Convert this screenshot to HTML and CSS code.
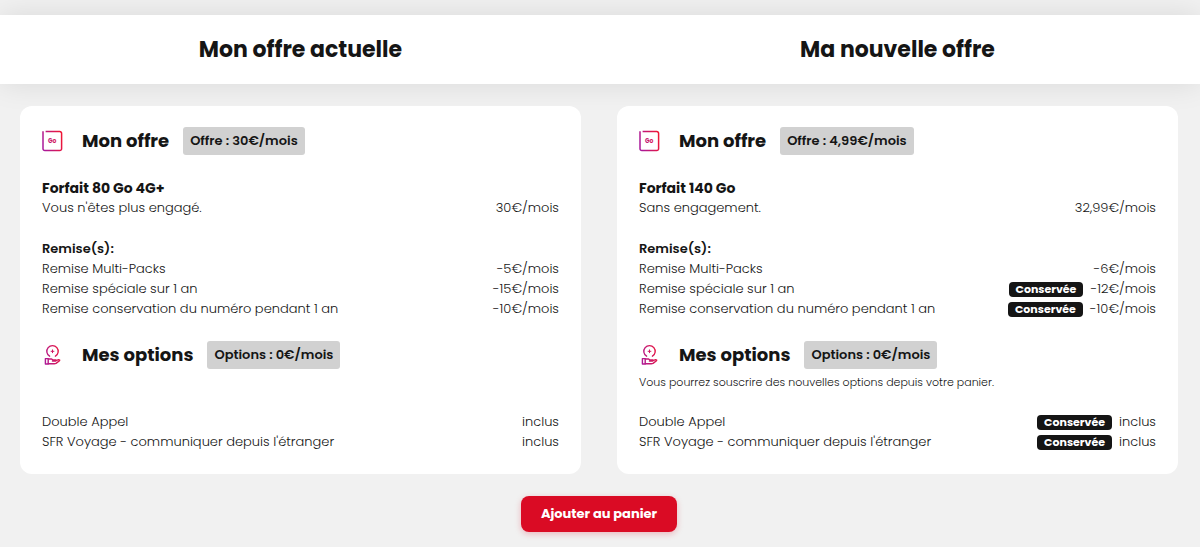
FILE: index.html
```html
<!DOCTYPE html>
<html lang="fr">
<head>
<meta charset="utf-8">
<meta name="viewport" content="width=device-width, initial-scale=1">
<title>Comparer mes offres</title>
<link rel="stylesheet" href="styles.css">
</head>
<body>
<svg class="defs" width="0" height="0" aria-hidden="true">
  <defs>
    <linearGradient id="brand" gradientUnits="userSpaceOnUse" x1="1" y1="14" x2="20" y2="9">
      <stop offset="0" stop-color="#a9199a"/>
      <stop offset="1" stop-color="#ee1637"/>
    </linearGradient>
    <symbol id="icon-data" viewBox="0 0 22 22">
      <path d="M1 1.2V18.8a1.8 1.8 0 0 0 1.8 1.8H17.8a1.8 1.8 0 0 0 1.8-1.8V3.4a1.8 1.8 0 0 0-1.8-1.8H3.6" fill="none" stroke="url(#brand)" stroke-width="1.5"/>
      <text x="10.2" y="13.2" text-anchor="middle" class="icon-label" fill="url(#brand)">Go</text>
    </symbol>
    <symbol id="icon-options" viewBox="0 0 22 22">
      <g fill="none" stroke="url(#brand)" stroke-width="1.4" stroke-linejoin="round" stroke-linecap="round">
        <path d="M7.6 12.2A5.7 5.7 0 1 1 13.4 12.2"/>
        <path d="M10.5 5.9v2.8M9.1 7.3h2.8" stroke-width="1"/>
        <path d="M3.4 14.6h2.8v5.4H3.4z"/>
        <path d="M6.4 15h3.2l1.2.9h3v1.2h-3.4M14 16.6l2.6-.9q1.6 0 .9 1L14 19.4q-1 .5-2.1.4H6.4"/>
      </g>
    </symbol>
  </defs>
</svg>

<header class="compare-header columns">
  <h1 class="compare-title">Mon offre actuelle</h1>
  <h1 class="compare-title">Ma nouvelle offre</h1>
</header>

<main>
  <div class="columns cards">
    <section class="card">
      <div class="card-head">
        <svg class="icon" aria-hidden="true"><use href="#icon-data"/></svg>
        <h2 class="card-title">Mon offre</h2>
        <span class="price-tag">Offre : 30€/mois</span>
      </div>
      <div class="plan">
        <h3 class="plan-name">Forfait 80 Go 4G+</h3>
        <p class="row"><span>Vous n'êtes plus engagé.</span><span class="amount">30€/mois</span></p>
      </div>
      <div class="discounts">
        <h4 class="list-title">Remise(s):</h4>
        <ul class="list">
          <li class="row"><span>Remise Multi-Packs</span><span class="amount">-5€/mois</span></li>
          <li class="row"><span>Remise spéciale sur 1 an</span><span class="amount">-15€/mois</span></li>
          <li class="row"><span>Remise conservation du numéro pendant 1 an</span><span class="amount">-10€/mois</span></li>
        </ul>
      </div>
      <div class="card-head">
        <svg class="icon" aria-hidden="true"><use href="#icon-options"/></svg>
        <h2 class="card-title">Mes options</h2>
        <span class="price-tag">Options : 0€/mois</span>
      </div>
      <p class="note"></p>
      <ul class="list">
        <li class="row"><span>Double Appel</span><span class="amount">inclus</span></li>
        <li class="row"><span>SFR Voyage - communiquer depuis l'étranger</span><span class="amount">inclus</span></li>
      </ul>
    </section>

    <section class="card">
      <div class="card-head">
        <svg class="icon" aria-hidden="true"><use href="#icon-data"/></svg>
        <h2 class="card-title">Mon offre</h2>
        <span class="price-tag">Offre : 4,99€/mois</span>
      </div>
      <div class="plan">
        <h3 class="plan-name">Forfait 140 Go</h3>
        <p class="row"><span>Sans engagement.</span><span class="amount">32,99€/mois</span></p>
      </div>
      <div class="discounts">
        <h4 class="list-title">Remise(s):</h4>
        <ul class="list">
          <li class="row"><span>Remise Multi-Packs</span><span class="amount">-6€/mois</span></li>
          <li class="row"><span>Remise spéciale sur 1 an</span><span class="amount"><span class="kept">Conservée</span>-12€/mois</span></li>
          <li class="row"><span>Remise conservation du numéro pendant 1 an</span><span class="amount"><span class="kept">Conservée</span>-10€/mois</span></li>
        </ul>
      </div>
      <div class="card-head">
        <svg class="icon" aria-hidden="true"><use href="#icon-options"/></svg>
        <h2 class="card-title">Mes options</h2>
        <span class="price-tag">Options : 0€/mois</span>
      </div>
      <p class="note">Vous pourrez souscrire des nouvelles options depuis votre panier.</p>
      <ul class="list">
        <li class="row"><span>Double Appel</span><span class="amount"><span class="kept">Conservée</span>inclus</span></li>
        <li class="row"><span>SFR Voyage - communiquer depuis l'étranger</span><span class="amount"><span class="kept">Conservée</span>inclus</span></li>
      </ul>
    </section>
  </div>

  <div class="actions">
    <button type="button" class="add-button">Ajouter au panier</button>
  </div>
</main>
</body>
</html>
```

FILE: styles.css
```css
* {
  box-sizing: border-box;
}

body {
  margin: 0;
  padding-top: 15px;
  background: #f1f1f1;
  color: #151515;
  font-family: Poppins, Inter, "Open Sans", sans-serif;
  font-size: 13px;
  line-height: 20px;
}

h1, h2, h3, h4, p, ul {
  margin: 0;
  padding: 0;
}

.defs {
  position: absolute;
}

.columns {
  display: grid;
  grid-template-columns: 1fr 1fr;
  column-gap: 36px;
  padding: 0 22px 0 20px;
}

.compare-header {
  background: #fff;
  box-shadow: 0 0 30px rgba(0, 0, 0, 0.1);
}

.compare-title {
  padding: 20px 0 19px;
  font-size: 22px;
  font-weight: 700;
  line-height: 30px;
  text-align: center;
}

.cards {
  position: relative;
  margin-top: 22px;
}

.card {
  padding: 21px 22px 22px;
  border-radius: 12px;
  background: #fff;
}

.card-head {
  display: flex;
  align-items: center;
  min-height: 28px;
}

.icon {
  flex: none;
  width: 22px;
  height: 22px;
  margin-right: 18px;
}

.icon-label {
  font-size: 6px;
  font-weight: 700;
}

.card-title {
  margin-right: 14px;
  font-size: 18px;
  font-weight: 700;
  line-height: 28px;
}

.price-tag {
  padding: 4px 7px;
  border-radius: 3px;
  background: #d1d1d1;
  font-weight: 600;
}

.plan {
  margin: 23px 0 21px;
}

.plan-name {
  font-size: 14px;
  font-weight: 700;
}

.discounts {
  margin-bottom: 22px;
}

.list-title {
  font-size: 13px;
  font-weight: 600;
}

.list {
  list-style: none;
}

.row {
  display: flex;
  justify-content: space-between;
  gap: 16px;
  font-weight: 300;
}

.amount {
  display: flex;
  align-items: center;
  gap: 7px;
  white-space: nowrap;
}

.kept {
  padding: 0 7px;
  border-radius: 4px;
  background: #151515;
  color: #fff;
  font-size: 11px;
  font-weight: 700;
  line-height: 15px;
}

.note {
  min-height: 20px;
  margin: 3px 0 20px;
  font-size: 11px;
  font-weight: 300;
}

.actions {
  padding: 22px 22px 16px 20px;
  text-align: center;
}

.add-button {
  padding: 8px 20px;
  border: 0;
  border-radius: 8px;
  background: #da0b24;
  box-shadow: 0 2px 6px rgba(218, 11, 36, 0.25);
  color: #fff;
  font: inherit;
  font-weight: 700;
  cursor: pointer;
}
```
